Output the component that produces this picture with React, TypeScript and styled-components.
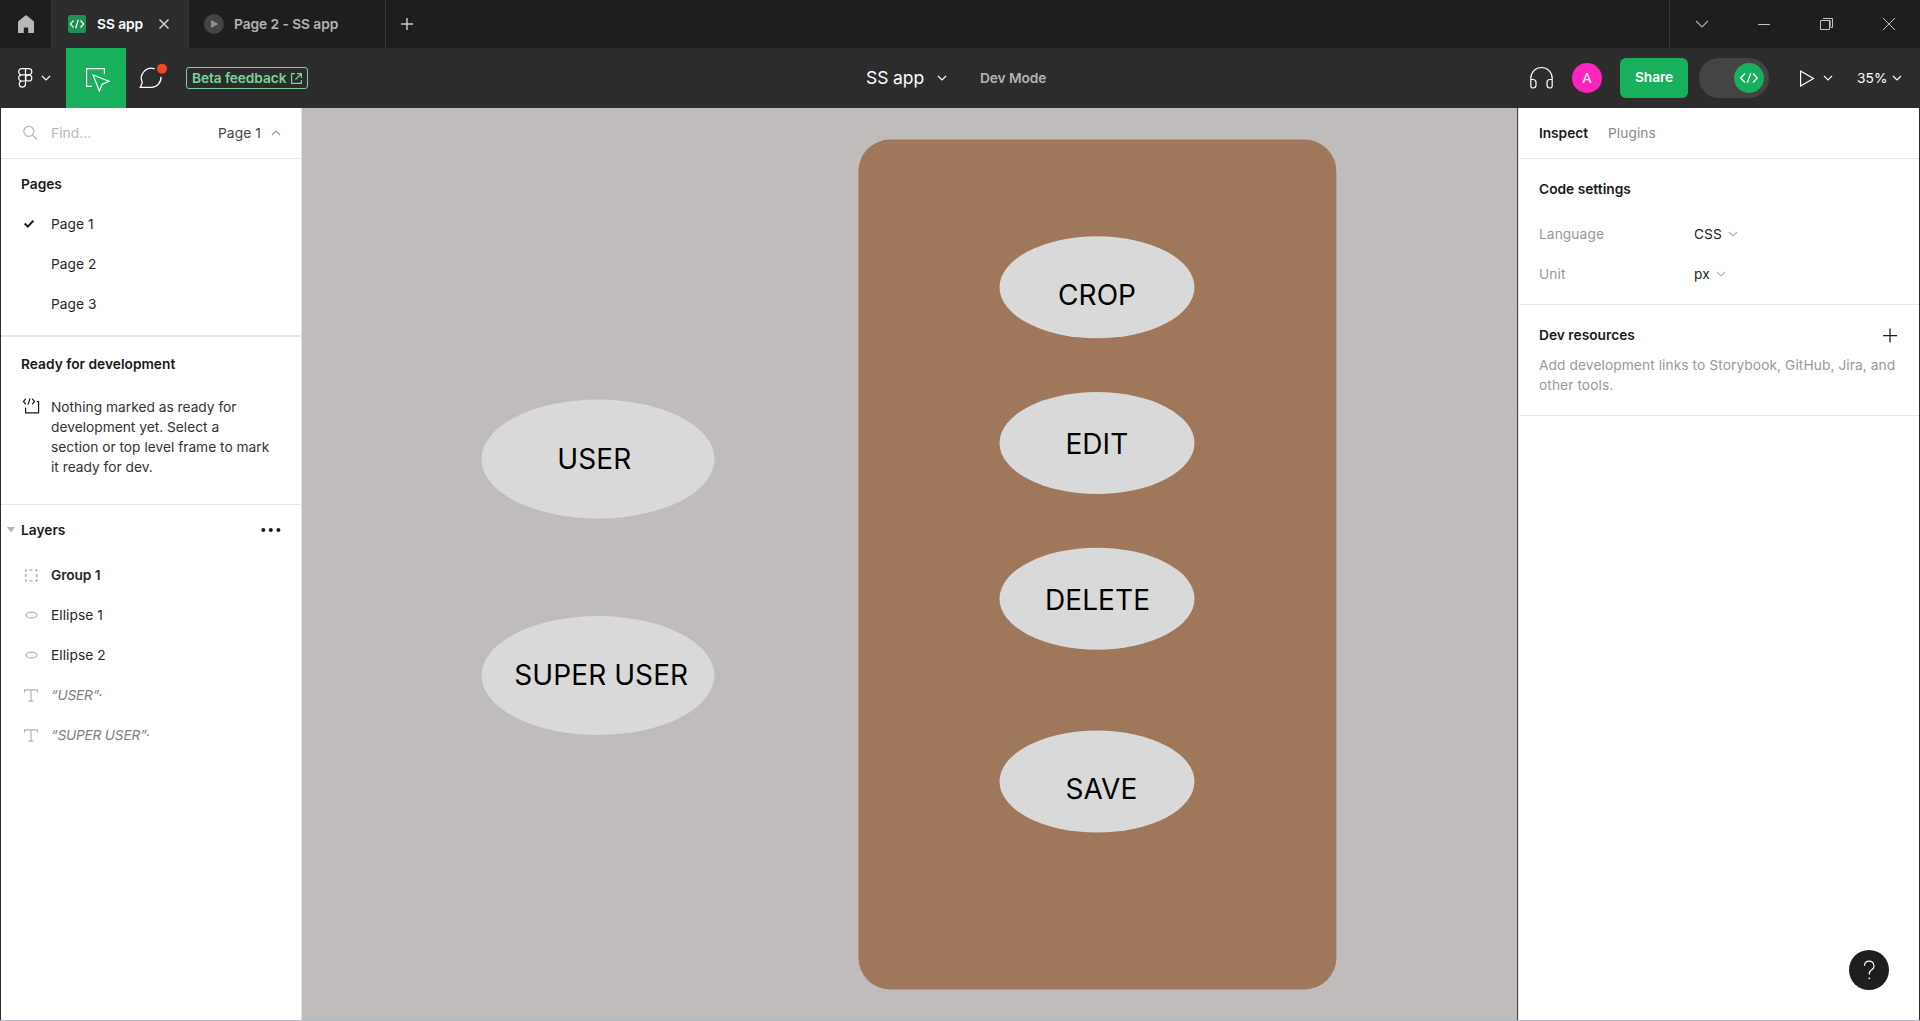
import React from "react";
import styled, { createGlobalStyle } from "styled-components";

const GlobalStyle = createGlobalStyle`
  * { box-sizing: border-box; }
  body { margin: 0; overflow: hidden; }
`;

const Window = styled.div`
  display: flex;
  flex-direction: column;
  position: relative;
  width: 1920px;
  height: 1021px;
  background: #2c2c2c;
  font-family: Inter, "Liberation Sans", sans-serif;
  font-size: 13.75px;
  letter-spacing: 0.07px;
  line-height: 20px;
  color: #1a1a1a;
  white-space: nowrap;
`;

const Icon = styled.svg`
  display: block;
  flex: none;
  fill: none;
  overflow: visible;
`;

/* ---------- Tab bar ---------- */

const TabBar = styled.header`
  display: flex;
  flex: none;
  height: 48px;
  padding-left: 1px;
  background: #1e1e1e;
`;

const HomeTab = styled.div`
  width: 51px;
  padding: 15px 0 0 17px;
  border-right: 1px solid #383838;
`;

const Tab = styled.div<{ $width: number; $active?: boolean }>`
  display: flex;
  align-items: center;
  width: ${(p) => p.$width}px;
  padding-left: ${(p) => (p.$active ? 16 : 15)}px;
  border-right: 1px solid #383838;
  background: ${(p) => (p.$active ? "#2c2c2c" : "#1e1e1e")};
  color: ${(p) => (p.$active ? "#fff" : "#b3b3b3")};
  font-weight: 600;
  letter-spacing: ${(p) => (p.$active ? -0.05 : -0.06)}px;
`;

const TabName = styled.span<{ $gap: number; $width: number }>`
  width: ${(p) => p.$width}px;
  margin-left: ${(p) => p.$gap}px;
`;

const NewTab = styled.div`
  padding: 18px 0 0 15px;
`;

const WindowControls = styled.div`
  display: flex;
  align-items: center;
  gap: 50px;
  width: 251px;
  margin-left: auto;
  padding-left: 26px;
  border-left: 1px solid #383838;
`;

/* ---------- Toolbar ---------- */

const Toolbar = styled.nav`
  display: grid;
  grid-template-columns: 866px 1fr auto;
  flex: none;
  height: 60px;
  color: #fff;
`;

const ToolGroup = styled.div`
  display: flex;
  align-items: center;
`;

const MainMenu = styled.div`
  display: flex;
  align-items: center;
  gap: 9px;
  width: 66px;
  padding-left: 18px;
`;

const InspectTool = styled.div`
  width: 60px;
  height: 60px;
  padding: 20px 0 0 20px;
  background: #18af5d;
`;

const CommentTool = styled.div`
  width: 60px;
  padding-left: 13px;
`;

const BetaLink = styled.a`
  display: flex;
  align-items: center;
  justify-content: space-between;
  width: 122px;
  height: 22px;
  padding: 0 5px;
  border: 1px solid #79d297;
  border-radius: 3px;
  color: #79d297;
  font-weight: 600;
  letter-spacing: -0.11px;
`;

const FileName = styled.span`
  width: 72px;
  font-size: 17.5px;
  letter-spacing: -0.1px;
`;

const ModeLabel = styled.span`
  margin-left: 34px;
  color: #b3b3b3;
  font-weight: 600;
  letter-spacing: -0.1px;
`;

const Avatar = styled.div`
  width: 30px;
  height: 30px;
  margin-left: 19px;
  border-radius: 50%;
  background: #ff24bd;
  text-align: center;
  line-height: 31px;
`;

const ShareButton = styled.button`
  width: 68px;
  height: 40px;
  margin-left: 18px;
  padding: 0 0 2px;
  border: 0;
  border-radius: 6px;
  background: #18af5d;
  color: #fff;
  font: inherit;
  font-weight: 600;
  letter-spacing: -0.1px;
`;

const ModeSwitch = styled.div`
  display: flex;
  align-items: center;
  justify-content: flex-end;
  width: 70px;
  height: 40px;
  margin-left: 11px;
  padding-right: 5px;
  border-radius: 20px;
  background: #444;
`;

const SwitchKnob = styled.div`
  display: flex;
  align-items: center;
  justify-content: center;
  width: 30px;
  height: 30px;
  border-radius: 50%;
  background: #18af5d;
`;

const PlayMenu = styled.div`
  display: flex;
  align-items: center;
  gap: 10px;
  margin-left: 31px;
`;

const ZoomMenu = styled.div`
  display: flex;
  align-items: center;
  width: 63px;
  margin-left: 25px;
`;

const ZoomValue = styled.span`
  width: 36px;
`;

/* ---------- Workspace ---------- */

const Workspace = styled.main`
  display: grid;
  grid-template-columns: 301px 1215px 402px;
  flex: 1;
  min-height: 0;
  padding: 0 1px;
  border-bottom: 1px solid #b1b8bf;
`;

const LeftPanel = styled.aside`
  border-right: 1px solid #e5e5e5;
  background: #fff;
`;

const SearchRow = styled.div`
  display: flex;
  align-items: center;
  height: 51px;
  padding-left: 22px;
  border-bottom: 1px solid #e5e5e5;
  color: #b8b8b8;
`;

const SearchHint = styled.span`
  width: 167px;
  margin-left: 14px;
`;

const PagePicker = styled.span`
  width: 54px;
  color: #444;
`;

const Section = styled.section<{ $height?: number; $line?: number }>`
  height: ${(p) => (p.$height ? p.$height + "px" : "auto")};
  border-bottom: ${(p) => p.$line ?? 0}px solid #e5e5e5;
`;

const Heading = styled.h2<{ $height: number; $left?: number; $top?: number }>`
  display: flex;
  align-items: center;
  height: ${(p) => p.$height}px;
  margin: 0;
  padding-top: ${(p) => p.$top ?? 0}px;
  padding-left: ${(p) => p.$left ?? 20}px;
  font-size: inherit;
  font-weight: 600;
  letter-spacing: 0;
`;

const Row = styled.div<{ $bold?: boolean; $muted?: boolean }>`
  display: flex;
  align-items: center;
  height: 40px;
  color: ${(p) => (p.$muted ? "#808080" : "#262626")};
  font-weight: ${(p) => (p.$bold ? 600 : 400)};
  font-style: ${(p) => (p.$muted ? "italic" : "normal")};
  letter-spacing: ${(p) => (p.$bold ? -0.1 : p.$muted ? -0.22 : 0.05)}px;
`;

const RowIcon = styled.span<{ $left?: number; $top?: number }>`
  display: flex;
  width: 50px;
  padding-top: ${(p) => p.$top ?? 0}px;
  padding-left: ${(p) => p.$left ?? 23}px;
`;

const ReadyNote = styled.div`
  display: flex;
  align-items: flex-start;
  padding-top: 6px;
  color: #333;
  letter-spacing: 0;
`;

const NoteText = styled.p`
  margin: 0;
`;

const MoreButton = styled.span`
  margin: 0 20px 0 auto;
`;

const RightPanel = styled.aside`
  border-left: 1px solid #444;
  box-shadow: inset 1px 0 0 #e5e5e5;
  background: #fff;
  letter-spacing: 0.08px;
`;

const PanelTabs = styled.div`
  display: flex;
  align-items: center;
  gap: 20px;
  height: 51px;
  padding-left: 21px;
  border-bottom: 1px solid #e5e5e5;
`;

const PanelTab = styled.span<{ $active?: boolean }>`
  color: ${(p) => (p.$active ? "#1a1a1a" : "#8c8c8c")};
  font-weight: ${(p) => (p.$active ? 600 : 400)};
  letter-spacing: ${(p) => (p.$active ? -0.05 : 0.07)}px;
`;

const Setting = styled.div`
  display: grid;
  grid-template-columns: 155px auto auto;
  align-items: center;
  justify-content: start;
  height: 40px;
  padding-left: 21px;
  color: #999;
`;

const SettingValue = styled.span`
  margin-right: 7px;
  color: #262626;
`;

const AddButton = styled.span`
  margin: 0 22.5px 0 auto;
`;

const HelpText = styled.p`
  margin: 0;
  padding-left: 21px;
  color: #999;
`;

const HelpButton = styled.button`
  position: absolute;
  right: 31px;
  bottom: 31px;
  width: 40px;
  height: 40px;
  padding: 0;
  border: 0;
  border-radius: 50%;
  background: #1e1e1e;
`;

/* ---------- Canvas: shapes sit at their own free coordinates ---------- */

const Canvas = styled.div`
  position: relative;
  overflow: hidden;
  background: #c0bcbb;
  color: #000;
  font-size: 28px;
  letter-spacing: 0.08px;
  line-height: 36px;
`;

interface Box {
  $x: number;
  $y: number;
  $w: number;
  $h: number;
}

const Shape = styled.div<Box>`
  position: absolute;
  left: 0;
  top: 0;
  width: ${(p) => p.$w}px;
  height: ${(p) => p.$h}px;
  transform: translate(${(p) => p.$x}px, ${(p) => p.$y}px);
`;

const Oval = styled(Shape)`
  border-radius: 50%;
  background: #d9d9d9;
`;

const Card = styled(Shape)`
  border-radius: 32px;
  background: #9f775b;
`;

const CanvasText = styled.span<{ $x: number; $y: number }>`
  position: absolute;
  left: ${(p) => p.$x}px;
  top: ${(p) => p.$y}px;
`;

function Chevron({ color = "#fff", up = false, w = 8 }: { color?: string; up?: boolean; w?: number }) {
  const h = w / 2;
  return (
    <Icon width={w} height={h} stroke={color} strokeWidth="1.2">
      <path d={up ? `M0 ${h}L${w / 2} 0L${w} ${h}` : `M0 0L${w / 2} ${h}L${w} 0`} />
    </Icon>
  );
}

function CodeGlyph({ width, height, stroke }: { width: number; height: number; stroke: number }) {
  return (
    <Icon width={width} height={height} viewBox="0 0 18 10" stroke="#fff" strokeWidth={stroke}>
      <path d="M5 .5L.7 5L5 9.5M13 .5L17.3 5L13 9.5M10.8 0L7.2 10" />
    </Icon>
  );
}

const ovals = [
  { name: "USER", x: 481.5, y: 399.6, w: 233, h: 118.5, tx: 557.3, ty: 441 },
  { name: "SUPER USER", x: 481.5, y: 616, w: 233, h: 119, tx: 514.3, ty: 657 },
  { name: "CROP", x: 999.5, y: 236.3, w: 195, h: 102, tx: 1058, ty: 277 },
  { name: "EDIT", x: 999.5, y: 392, w: 195, h: 102, tx: 1065.4, ty: 426 },
  { name: "DELETE", x: 999.5, y: 547.7, w: 195, h: 102, tx: 1045, ty: 582 },
  { name: "SAVE", x: 999.5, y: 730.6, w: 195, h: 102, tx: 1065.5, ty: 771 },
];

const originX = 302;
const originY = 108;

export default function App() {
  return (
    <Window>
      <GlobalStyle />
      <TabBar>
        <HomeTab>
          <Icon width="16" height="18">
            <path fill="#b8b8b8" d="M8 0L16 6.6V18H10.2V12.5H5.8V18H0V6.6Z" />
          </Icon>
        </HomeTab>
        <Tab $width={137} $active>
          <Icon width="18" height="18">
            <rect width="18" height="18" rx="2" fill="#1c9152" />
            <path stroke="#fff" strokeWidth="1.2" d="M5.5 5.5L2.3 9L5.5 12.5M12.5 5.5L15.7 9L12.5 12.5M10.3 4.8L7.7 13.2" />
          </Icon>
          <TabName $gap={11} $width={62}>SS app</TabName>
          <Icon width="10" height="10" stroke="#ccc" strokeWidth="1.6">
            <path d="M.5 .5L9.5 9.5M9.5 .5L.5 9.5" />
          </Icon>
        </Tab>
        <Tab $width={197}>
          <Icon width="20" height="20">
            <circle cx="10" cy="10" r="10" fill="#444" />
            <path fill="#8c8c8c" d="M7 6L14.5 10L7 14Z" />
          </Icon>
          <TabName $gap={10} $width={120}>Page 2 - SS app</TabName>
        </Tab>
        <NewTab>
          <Icon width="12" height="12" stroke="#ccc" strokeWidth="1.4">
            <path d="M6 0V12M0 6H12" />
          </Icon>
        </NewTab>
        <WindowControls>
          <Chevron color="#aaa" w={12} />
          <Icon width="12" height="12" stroke="#c4c4c4"><path d="M0 6.5H12" /></Icon>
          <Icon width="13" height="12" stroke="#c4c4c4">
            <path stroke="#8c8c8c" d="M3 2.5H10.5V9.5" />
            <path d="M.5 2.5H9.5V11.5H.5ZM3 .5H12.5V9.5H11" />
          </Icon>
          <Icon width="12" height="12" stroke="#c4c4c4"><path d="M0 0L12 12M12 0L0 12" /></Icon>
        </WindowControls>
      </TabBar>

      <Toolbar>
        <ToolGroup>
          <MainMenu>
            <Icon width="15" height="20" stroke="#fff" strokeWidth="1.2">
              <path d="M7.5 .6H3.8a3.1 3.1 0 0 0 0 6.2H7.5ZM7.5 .6H10.7a3.1 3.1 0 0 1 0 6.2H7.5ZM7.5 6.8H3.8a3.1 3.1 0 0 0 0 6.2H7.5ZM7.5 13H3.8a3.1 3.1 0 1 0 3.7 3.1Z" />
              <circle cx="10.7" cy="9.9" r="3.1" />
            </Icon>
            <Chevron />
          </MainMenu>
          <InspectTool>
            <Icon width="24" height="24" stroke="#fff" strokeWidth="1.2">
              <path d="M6 18.4H.6V.6H18.4V6M7 7L23 13.2L16.2 16.2L13.4 23Z" />
            </Icon>
          </InspectTool>
          <CommentTool>
            <Icon width="23" height="22" stroke="#fff" strokeWidth="1.25">
              <path d="M15.6 1.8A10 10 0 0 0 3.3 15.5L1.3 20.4H12.4A9.8 9.8 0 0 0 22 9.8" />
              <circle cx="23" cy="1.8" r="5" fill="#f24822" stroke="none" />
            </Icon>
          </CommentTool>
          <BetaLink>
            Beta feedback
            <Icon width="11" height="11" stroke="#79d297" strokeWidth="1.2">
              <path d="M4 .6H.6V10.4H10.4V7M6 .6H10.4V5M10.4 .6L4.5 6.5" />
            </Icon>
          </BetaLink>
        </ToolGroup>
        <ToolGroup>
          <FileName>SS app</FileName>
          <Chevron />
          <ModeLabel>Dev Mode</ModeLabel>
        </ToolGroup>
        <ToolGroup>
          <Icon width="23" height="22" stroke="#fff" strokeWidth="1.2">
            <path d="M.8 18V11.2a10.7 10.7 0 0 1 21.4 0V18M.8 12.5H3a3 3 0 0 1 3 3V18a3 3 0 0 1-3 3a2.3 2.3 0 0 1-2.2-2.3ZM22.2 12.5H20a3 3 0 0 0-3 3V18a3 3 0 0 0 3 3a2.3 2.3 0 0 0 2.2-2.3Z" />
          </Icon>
          <Avatar>A</Avatar>
          <ShareButton>Share</ShareButton>
          <ModeSwitch>
            <SwitchKnob><CodeGlyph width={18} height={10} stroke={1.25} /></SwitchKnob>
          </ModeSwitch>
          <PlayMenu>
            <Icon width="14" height="17" stroke="#fff" strokeWidth="1.2"><path d="M.6 1L13.5 8.5L.6 16Z" /></Icon>
            <Chevron />
          </PlayMenu>
          <ZoomMenu>
            <ZoomValue>35%</ZoomValue>
            <Chevron />
          </ZoomMenu>
        </ToolGroup>
      </Toolbar>

      <Workspace>
        <LeftPanel>
          <SearchRow>
            <Icon width="14" height="14" stroke="#b3b3b3" strokeWidth="1.2">
              <circle cx="5.8" cy="5.3" r="5" />
              <path d="M9.4 8.9L14 13.5" />
            </Icon>
            <SearchHint>Find...</SearchHint>
            <PagePicker>Page 1</PagePicker>
            <Chevron color="#999" up />
          </SearchRow>
          <Section $height={178} $line={2}>
            <Heading $height={45} $top={5}>Pages</Heading>
            <Row>
              <RowIcon>
                <Icon width="10" height="8" stroke="#1a1a1a" strokeWidth="2"><path d="M.7 3.5L3.8 6.6L9.3 .8" /></Icon>
              </RowIcon>
              Page 1
            </Row>
            <Row><RowIcon />Page 2</Row>
            <Row><RowIcon />Page 3</Row>
          </Section>
          <Section $height={168} $line={1}>
            <Heading $height={54}>Ready for development</Heading>
            <ReadyNote>
              <RowIcon $left={22} $top={2}>
                <Icon width="16" height="16" stroke="#1a1a1a" strokeWidth="1.2">
                  <path d="M2.8 -.3L.5 2.5L2.8 5.3M9.2 -.3L11.5 2.5L9.2 5.3M7 -.6L5 5.6M2.6 8.5V13.9H15.6V2.6H13.8" />
                </Icon>
              </RowIcon>
              <NoteText>
                Nothing marked as ready for<br />
                development yet. Select a<br />
                section or top level frame to mark<br />
                it ready for dev.
              </NoteText>
            </ReadyNote>
          </Section>
          <Section>
            <Heading $height={50} $left={6}>
              <Icon width="14" height="6"><path fill="#b3b3b3" d="M0 0H8L4 5.5Z" /></Icon>
              Layers
              <MoreButton>
                <Icon width="20" height="4">
                  <g fill="#1a1a1a"><circle cx="2.3" cy="2" r="2" /><circle cx="9.8" cy="2" r="2" /><circle cx="17.4" cy="2" r="2" /></g>
                </Icon>
              </MoreButton>
            </Heading>
            <Row $bold>
              <RowIcon>
                <Icon width="13" height="13" stroke="#999" strokeWidth="1.2">
                  <path d="M1.5 1H3M5.5 1H8.5M11 1H12.5M1.5 12H3M5.5 12H8.5M11 12H12.5M1.8 .5V2.5M1.8 5V8M1.8 10.5V12.5M12.8 .5V2.5M12.8 5V8M12.8 10.5V12.5" />
                </Icon>
              </RowIcon>
              Group 1
            </Row>
            {["Ellipse 1", "Ellipse 2"].map((name) => (
              <Row key={name}>
                <RowIcon>
                  <Icon width="14" height="8" stroke="#b3b3b3" strokeWidth="1.2"><ellipse cx="7.5" cy="4" rx="5.5" ry="2.9" /></Icon>
                </RowIcon>
                {name}
              </Row>
            ))}
            {["“USER”·", "“SUPER USER”·"].map((name) => (
              <Row key={name} $muted>
                <RowIcon>
                  <Icon width="14" height="13" stroke="#b3b3b3" strokeWidth="1.2"><path d="M.6 3.5V.8H13.4V3.5M7 .8V12.2M4.5 12.2H9.5" /></Icon>
                </RowIcon>
                {name}
              </Row>
            ))}
          </Section>
        </LeftPanel>

        <Canvas>
          <Card $x={858.4 - originX} $y={139.5 - originY} $w={478} $h={850} />
          {ovals.map((o) => (
            <React.Fragment key={o.name}>
              <Oval $x={o.x - originX} $y={o.y - originY} $w={o.w} $h={o.h} />
              <CanvasText $x={o.tx - originX} $y={o.ty - originY}>{o.name}</CanvasText>
            </React.Fragment>
          ))}
        </Canvas>

        <RightPanel>
          <PanelTabs>
            <PanelTab $active>Inspect</PanelTab>
            <PanelTab>Plugins</PanelTab>
          </PanelTabs>
          <Section $height={146} $line={1}>
            <Heading $height={55} $left={21} $top={4}>Code settings</Heading>
            <Setting>Language<SettingValue>CSS</SettingValue><Chevron color="#b3b3b3" /></Setting>
            <Setting>Unit<SettingValue>px</SettingValue><Chevron color="#b3b3b3" /></Setting>
          </Section>
          <Section $height={111} $line={1}>
            <Heading $height={50} $left={21} $top={10}>
              Dev resources
              <AddButton>
                <Icon width="14" height="14" stroke="#1a1a1a" strokeWidth="1.25"><path d="M7 .5V14.5M0 7.5H14" /></Icon>
              </AddButton>
            </Heading>
            <HelpText>
              Add development links to Storybook, GitHub, Jira, and<br />
              other tools.
            </HelpText>
          </Section>
        </RightPanel>
      </Workspace>

      <HelpButton>
        <Icon width="40" height="40" stroke="#fff" strokeWidth="1.2">
          <path d="M15.5 15.8A4.7 4.7 0 1 1 22.3 20Q20.3 21.3 20.3 24.6" />
          <circle cx="20.3" cy="28.3" r=".9" fill="#fff" stroke="none" />
        </Icon>
      </HelpButton>
    </Window>
  );
}
